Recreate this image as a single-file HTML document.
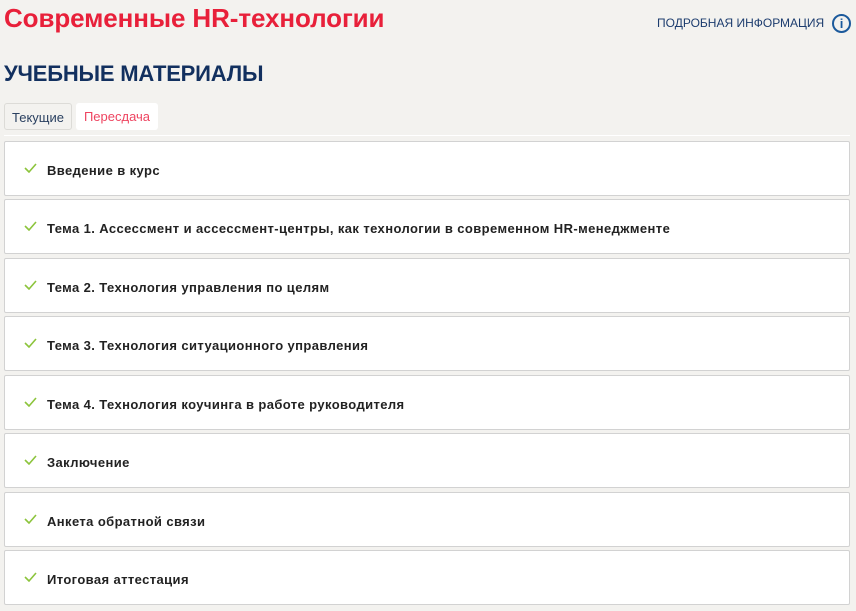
<!DOCTYPE html>
<html><head><meta charset="utf-8"><style>
body{margin:0;background:#f3f2ef;font-family:"Liberation Sans","DejaVu Sans",sans-serif;width:856px;height:611px;overflow:hidden;position:relative}
.t{position:absolute;left:4px;top:3px;font-size:26px;color:#e8203a;font-weight:bold;letter-spacing:-0.1px}
.info{position:absolute;left:657px;top:16px;font-size:12px;color:#1c3c6e}
.ic{position:absolute;left:832px;top:14px;width:15px;height:15px;border:2px solid #1c5a9c;border-radius:50%;color:#1c5a9c;font-weight:bold;font-size:13px;text-align:center;line-height:15px}
.h{position:absolute;left:4px;top:61px;font-size:22px;color:#12305f;font-weight:bold;letter-spacing:-0.2px}
.tab{position:absolute;top:103px;height:27px;line-height:27px;font-size:13px;border-radius:3px;box-sizing:border-box;text-align:center}
.line{position:absolute;left:4px;right:6px;top:135px;height:1px;background:#fff}
.card{position:absolute;left:4px;width:846px;height:55px;background:#fff;border:1px solid #d2d2d2;border-radius:2px;box-sizing:border-box}
.card span{position:absolute;left:42px;top:21px;font-size:13px;font-weight:bold;color:#222;letter-spacing:0.4px}
.card svg{position:absolute;left:19px;top:21px}
</style></head><body>
<div class="t">Современные HR-технологии</div>
<div class="info">ПОДРОБНАЯ ИНФОРМАЦИЯ</div>
<div class="ic">i</div>
<div class="h">УЧЕБНЫЕ МАТЕРИАЛЫ</div>
<div class="tab" style="left:4px;width:68px;border:1px solid #dcdbd7;color:#2a4060">Текущие</div>
<div class="tab" style="left:76px;width:82px;background:#fff;color:#ee4460">Пересдача</div>
<div class="line"></div>
<div class="card" style="top:141px"><svg width="13" height="10"><path d="M1 5l4 4 7-8" fill="none" stroke="#8cc43c" stroke-width="1.6"/></svg><span>Введение в курс</span></div>
<div class="card" style="top:199px"><svg width="13" height="10"><path d="M1 5l4 4 7-8" fill="none" stroke="#8cc43c" stroke-width="1.6"/></svg><span>Тема 1. Ассессмент и ассессмент-центры, как технологии в современном HR-менеджменте</span></div>
<div class="card" style="top:258px"><svg width="13" height="10"><path d="M1 5l4 4 7-8" fill="none" stroke="#8cc43c" stroke-width="1.6"/></svg><span>Тема 2. Технология управления по целям</span></div>
<div class="card" style="top:316px"><svg width="13" height="10"><path d="M1 5l4 4 7-8" fill="none" stroke="#8cc43c" stroke-width="1.6"/></svg><span>Тема 3. Технология ситуационного управления</span></div>
<div class="card" style="top:375px"><svg width="13" height="10"><path d="M1 5l4 4 7-8" fill="none" stroke="#8cc43c" stroke-width="1.6"/></svg><span>Тема 4. Технология коучинга в работе руководителя</span></div>
<div class="card" style="top:433px"><svg width="13" height="10"><path d="M1 5l4 4 7-8" fill="none" stroke="#8cc43c" stroke-width="1.6"/></svg><span>Заключение</span></div>
<div class="card" style="top:492px"><svg width="13" height="10"><path d="M1 5l4 4 7-8" fill="none" stroke="#8cc43c" stroke-width="1.6"/></svg><span>Анкета обратной связи</span></div>
<div class="card" style="top:550px"><svg width="13" height="10"><path d="M1 5l4 4 7-8" fill="none" stroke="#8cc43c" stroke-width="1.6"/></svg><span>Итоговая аттестация</span></div>
</body></html>
